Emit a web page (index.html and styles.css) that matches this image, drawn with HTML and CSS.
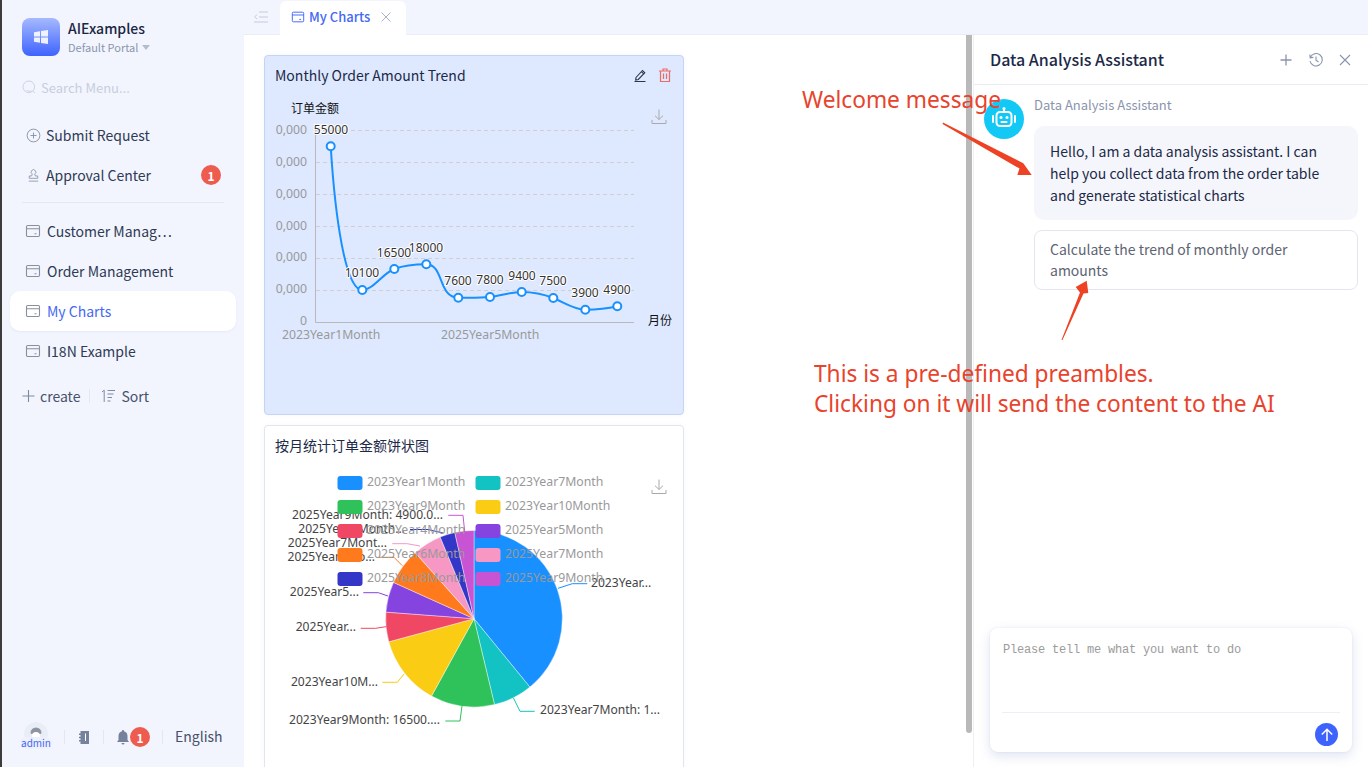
FILE: index.html
```html
<!DOCTYPE html>
<html lang="en">
<head>
<meta charset="utf-8">
<title>My Charts</title>
<link rel="stylesheet" href="styles.css">
</head>
<body>
<svg class="defs" width="0" height="0" aria-hidden="true">
  <symbol id="i-page" viewBox="0 0 16 16"><rect x="1.5" y="2.5" width="13" height="11" rx="1.2" fill="none" stroke="currentColor" stroke-width="1.1"/><path d="M1.5 5.7h13M9.5 10.8h2" fill="none" stroke="currentColor" stroke-width="1.1"/></symbol>
  <symbol id="i-down" viewBox="0 0 16 16"><path d="M8 1v10M4 7.2 8 11l4-3.8M1 11.5V15h14v-3.5" fill="none" stroke="currentColor" stroke-width="1"/></symbol>
</svg>
<div class="app">
  <aside class="sidebar">
    <div class="brand">
      <div class="logo"><svg width="16" height="16" viewBox="0 0 16 16"><path d="M1 3.2 7 2.2V7.6H1ZM8 2 15 1V7.6H8ZM1 8.4H7V13.8L1 12.8ZM8 8.4H15V15L8 14Z" fill="#fff" opacity=".88"/></svg></div>
      <div class="brand-text">
        <div class="brand-name">AIExamples</div>
        <div class="brand-sub">Default Portal <span class="caret"></span></div>
      </div>
    </div>
    <div class="search"><svg width="14" height="14" viewBox="0 0 14 14"><circle cx="6.8" cy="6.8" r="5.8" fill="none" stroke="#cdd3e2" stroke-width="1"/><path d="M4.5 10.5a5 5 0 0 0 5 .3M10.8 11l2 2" fill="none" stroke="#cdd3e2"/></svg><span>Search Menu...</span></div>
    <nav class="menu">
      <div class="item">
        <svg class="ic" viewBox="0 0 16 16"><circle cx="8" cy="8" r="6.8" fill="none" stroke="currentColor"/><path d="M8 4.8v6.4M4.8 8h6.4" stroke="currentColor"/></svg>
        <span class="label">Submit Request</span></div>
      <div class="item">
        <svg class="ic" viewBox="0 0 16 16"><path d="M6 8.500 6.700 6.500A2.500 2.500 0 1 1 9.300 6.500L10 8.500H12.500V11H3.500V8.500ZM3 14h10" fill="none" stroke="currentColor" stroke-width=".9"/></svg>
        <span class="label">Approval Center</span><span class="badge push">1</span></div>
      <div class="rule"></div>
      <div class="item page"><svg class="ic"><use href="#i-page"/></svg><span class="label ell">Customer Manag…</span></div>
      <div class="item page"><svg class="ic"><use href="#i-page"/></svg><span class="label">Order Management</span></div>
      <div class="item page active"><svg class="ic"><use href="#i-page"/></svg><span class="label">My Charts</span></div>
      <div class="item page"><svg class="ic"><use href="#i-page"/></svg><span class="label">I18N Example</span></div>
    </nav>
    <div class="tools">
      <svg width="13" height="14" viewBox="0 0 14 14"><path d="M7 .5v13M.5 7h13" stroke="#7f8aa3" stroke-width="1.2"/></svg>
      <span>create</span><i class="vr"></i>
      <svg width="15" height="14" viewBox="0 0 15 14"><path d="M1 3 3.200 1.200V13M6.500 1.500h7.500M6.500 5h6M6.500 8.500h4.500M6.500 12h3" fill="none" stroke="#7f8aa3"/></svg>
      <span>Sort</span>
    </div>
    <div class="foot">
      <div class="user"><div class="avatar"><svg width="24" height="24" viewBox="0 0 24 24"><circle cx="12" cy="12" r="12" fill="#e9edf5"/><path d="M6.500 11a5.500 5.500 0 0 1 11 0l-1 1H7.500Z" fill="#8d95a5"/><circle cx="12" cy="14" r="4" fill="#fff"/></svg></div><span class="user-tag">admin</span></div>
      <i class="vr"></i>
      <svg width="10" height="13" viewBox="0 0 10 13"><path d="M1.500 0H10V13H1.500V10.500H0V9H1.500V7.300H0V5.700H1.500V4H0V2.500H1.500Z" fill="#76829b"/><path d="M6.500 2.500V10" stroke="#fff"/></svg>
      <i class="vr"></i>
      <div class="bell"><svg width="14" height="15" viewBox="0 0 14 15"><path d="M7 0a1 1 0 0 1 1 1.200C10.500 1.800 11.500 3.800 11.500 6V10L13 12H1L2.500 10V6C2.500 3.800 3.500 1.800 6 1.200A1 1 0 0 1 7 0ZM5.500 13H8.500A1.500 1.500 0 0 1 5.500 13Z" fill="#76829b"/></svg><span class="badge">1</span></div>
      <i class="vr"></i>
      <span class="lang">English</span>
    </div>
  </aside>

  <main class="main">
    <header class="tabbar">
      <svg class="collapse" width="14" height="12" viewBox="0 0 14 12"><path d="M5 1h9M5 6h9M0 11h14M3 3.500.8 5.800 3 8" fill="none" stroke="#c4cbdb"/></svg>
      <div class="tab">
        <svg class="ic"><use href="#i-page"/></svg>
        <span>My Charts</span>
        <svg class="tab-x" width="10" height="10" viewBox="0 0 10 10"><path d="M.5.500l9 9M9.500.500l-9 9" stroke="#a9b1c4"/></svg>
      </div>
    </header>
    <div class="body">
      <section class="content">
        <article class="card selected">
          <div class="card-head">
            <h3>Monthly Order Amount Trend</h3>
            <div class="card-actions">
              <svg width="14" height="14" viewBox="0 0 14 14"><path d="M3 9.500 9.500 2.500 11.800 4.700 5.300 11.500 2.700 12ZM8.500 3.700l2.200 2.200M1.500 13.500h11" fill="none" stroke="#2b3653" stroke-width="1.100"/></svg>
              <svg width="12" height="14" viewBox="0 0 12 14"><path d="M0 3h12M4 3V1h4v2M1.500 3v10.500h9V3M4.500 5.500v5.500M7.500 5.500v5.500" fill="none" stroke="#ee6a63" stroke-width="1.200"/></svg>
            </div>
          </div>
          <svg class="chart chart-line" viewBox="276 95 396 310">
            <g class="grid">
              <path d="M316 130.500H634M316 162.500H634M316 194.500H634M316 226.500H634M316 258.500H634M316 290.500H634"/>
            </g>
            <path class="axis" d="M315.500 130V322.500H634"/>
            <text class="ax-name" x="291" y="113">订单金额</text>
            <text class="ax-name" x="648" y="325">月份</text>
            <g class="ax" text-anchor="end">
              <text x="307" y="134">60,000</text><text x="307" y="166">50,000</text><text x="307" y="198">40,000</text><text x="307" y="230">30,000</text><text x="307" y="261">20,000</text><text x="307" y="293">10,000</text><text x="307" y="325">0</text>
            </g>
            <text class="ax" x="282" y="339">2023Year1Month</text>
            <text class="ax" x="441" y="339">2025Year5Month</text>
            <use href="#i-down" x="651" y="108" width="16" height="17" class="dl"/>
            <path class="line" d="M330.700 146.300C335 215 345 290 362.300 290C373 290 383 273 394.300 269C405 265 415 264.300 426.300 264.300C444 264.300 438 297.700 458.300 297.700C468 297.700 480 298 490 297C500 296 510 292 521.700 292C532 292 543 294 553.300 298C565 303 574 309.700 585.300 309.700C596 309.700 606 309 617.300 306.300"/>
            <g class="dots">
              <circle cx="330.700" cy="146.300" r="4"/><circle cx="362.300" cy="290" r="4"/><circle cx="394.300" cy="269" r="4"/><circle cx="426.300" cy="264.300" r="4"/><circle cx="458.300" cy="297.700" r="4"/><circle cx="490" cy="297" r="4"/><circle cx="521.700" cy="292" r="4"/><circle cx="553.300" cy="298" r="4"/><circle cx="585.300" cy="309.700" r="4"/><circle cx="617.300" cy="306.300" r="4"/>
            </g>
            <g class="val" text-anchor="middle">
              <text x="331" y="134">55000</text><text x="362" y="277">10100</text><text x="394" y="257">16500</text><text x="426" y="252">18000</text><text x="458" y="285">7600</text><text x="490" y="284">7800</text><text x="522" y="280">9400</text><text x="553" y="285">7500</text><text x="585" y="297">3900</text><text x="617" y="294">4900</text>
            </g>
          </svg>
        </article>
        <article class="card">
          <div class="card-head"><h3>按月统计订单金额饼状图</h3></div>
          <svg class="chart chart-pie" viewBox="276 465 396 310">
            <use href="#i-down" x="651" y="478" width="16" height="17" class="dl"/>
            <g class="slices">
              <path fill="#1890ff" d="M474 618.700L474 530.400A88.300 88.300 0 0 1 529.900 687.100Z"/>
              <path fill="#13c2c2" d="M474 618.700L529.900 687.100A88.300 88.300 0 0 1 494.500 704.600Z"/>
              <path fill="#2fc25b" d="M474 618.700L494.500 704.600A88.300 88.300 0 0 1 431.500 696.100Z"/>
              <path fill="#facc14" d="M474 618.700L431.500 696.100A88.300 88.300 0 0 1 388.800 641.800Z"/>
              <path fill="#f04864" d="M474 618.700L388.800 641.800A88.300 88.300 0 0 1 385.900 612.100Z"/>
              <path fill="#8543e0" d="M474 618.700L385.900 612.100A88.300 88.300 0 0 1 393.500 582.400Z"/>
              <path fill="#ff7a1d" d="M474 618.700L393.500 582.400A88.300 88.300 0 0 1 415.300 552.800Z"/>
              <path fill="#f797c4" d="M474 618.700L415.300 552.800A88.300 88.300 0 0 1 440.200 537.100Z"/>
              <path fill="#3436c7" d="M474 618.700L440.200 537.100A88.300 88.300 0 0 1 454.800 532.500Z"/>
              <path fill="#c854d3" d="M474 618.700L454.800 532.500A88.300 88.300 0 0 1 474 530.400Z"/>
            </g>
            <g class="leaders">
              <path stroke="#1890ff" d="M558 588.300 572.300 583.700H587.300"/>
              <path stroke="#13c2c2" d="M513.300 697.700 520 711.300H534.700"/>
              <path stroke="#2fc25b" d="M462 706 460 721H445.300"/>
              <path stroke="#facc14" d="M404 674 397.300 682.300H382.300"/>
              <path stroke="#f04864" d="M386 626.700 375.700 628.300H360.700"/>
              <path stroke="#8543e0" d="M388 596 378.300 592.700H363.300"/>
              <path stroke="#ff7a1d" d="M402.300 565.700 394 557.300H379"/>
              <path stroke="#f797c4" d="M420 546 407.300 543.700H392.300"/>
              <path stroke="#3436c7" d="M443 533 428 529.500H410"/>
              <path stroke="#c854d3" d="M464.700 531.700 463 515.300H448.300"/>
            </g>
            <g class="lab">
              <text x="591" y="587">2023Year...</text>
              <text x="540" y="714">2023Year7Month: 1...</text>
              <text x="440" y="724" text-anchor="end">2023Year9Month: 16500....</text>
              <text x="378" y="686" text-anchor="end">2023Year10M...</text>
              <text x="356" y="631" text-anchor="end">2025Year...</text>
              <text x="359" y="596" text-anchor="end">2025Year5...</text>
              <text x="375" y="561" text-anchor="end">2025Year6Mo...</text>
              <text x="387" y="547" text-anchor="end">2025Year7Mont...</text>
              <text x="405" y="533" text-anchor="end">2025Year8Month...</text>
              <text x="443" y="519" text-anchor="end">2025Year9Month: 4900.0...</text>
            </g>
            <g class="swatches">
              <rect x="337.500" y="476" width="25" height="14" rx="3" fill="#1890ff"/><rect x="475.500" y="476" width="25" height="14" rx="3" fill="#13c2c2"/>
              <rect x="337.500" y="500" width="25" height="14" rx="3" fill="#2fc25b"/><rect x="475.500" y="500" width="25" height="14" rx="3" fill="#facc14"/>
              <rect x="337.500" y="524" width="25" height="14" rx="3" fill="#f04864"/><rect x="475.500" y="524" width="25" height="14" rx="3" fill="#8543e0"/>
              <rect x="337.500" y="548" width="25" height="14" rx="3" fill="#ff7a1d"/><rect x="475.500" y="548" width="25" height="14" rx="3" fill="#f797c4"/>
              <rect x="337.500" y="572" width="25" height="14" rx="3" fill="#3436c7"/><rect x="475.500" y="572" width="25" height="14" rx="3" fill="#c854d3"/>
            </g>
            <g class="ax">
              <text x="367" y="486">2023Year1Month</text><text x="505" y="486">2023Year7Month</text>
              <text x="367" y="510">2023Year9Month</text><text x="505" y="510">2023Year10Month</text>
              <text x="367" y="534">2025Year4Month</text><text x="505" y="534">2025Year5Month</text>
              <text x="367" y="558">2025Year6Month</text><text x="505" y="558">2025Year7Month</text>
              <text x="367" y="582">2025Year8Month</text><text x="505" y="582">2025Year9Month</text>
            </g>
          </svg>
        </article>
      </section>
      <div class="scroll-thumb"></div>
      <aside class="panel">
        <div class="panel-head">
          <h2>Data Analysis Assistant</h2>
          <div class="panel-actions">
            <svg width="14" height="14" viewBox="0 0 14 14"><path d="M7 1.500v11M1.500 7h11" stroke="#8a94ad" stroke-width="1.300"/></svg>
            <svg width="14" height="14" viewBox="0 0 14 14"><path d="M1.300 4.500A6.200 6.200 0 1 1 1 8M.8 1.500 1.200 4.800 4.400 4.400M7 3.500V7.300L9.500 9" fill="none" stroke="#8a94ad" stroke-width="1.100"/></svg>
            <svg width="12" height="12" viewBox="0 0 12 12"><path d="M1 1l10 10M11 1 1 11" stroke="#8a94ad" stroke-width="1.100"/></svg>
          </div>
        </div>
        <div class="chat">
          <div class="robot"><svg width="26" height="26" viewBox="0 0 26 26"><path d="M13 2v3" stroke="#fff" stroke-width="1.800"/><circle cx="13" cy="2.500" r="1.500" fill="#fff"/><rect x="5.500" y="6" width="15" height="14" rx="3.500" fill="none" stroke="#fff" stroke-width="2"/><circle cx="10" cy="11.500" r="1.500" fill="#fff"/><circle cx="16" cy="11.500" r="1.500" fill="#fff"/><path d="M10.500 16h5M2 10v6M24 10v6" stroke="#fff" stroke-width="2" stroke-linecap="round"/></svg></div>
          <div class="msg">
            <div class="msg-name">Data Analysis Assistant</div>
            <div class="bubble">Hello, I am a data analysis assistant. I can help you collect data from the order table and generate statistical charts</div>
            <div class="preamble">Calculate the trend of monthly order amounts</div>
          </div>
        </div>
        <div class="composer">
          <div class="placeholder">Please tell me what you want to do</div>
          <div class="composer-foot">
            <div class="send"><svg width="14" height="14" viewBox="0 0 14 14"><path d="M7 13V1.500M1.800 6.500 7 1.300l5.200 5.200" fill="none" stroke="#fff" stroke-width="1.500"/></svg></div>
          </div>
        </div>
      </aside>
    </div>
  </main>
</div>
<div class="note note-a">Welcome message</div>
<div class="note note-b">This is a pre-defined preambles.<br>Clicking on it will send the content to the AI</div>
<svg class="arrows" width="1368" height="767" viewBox="0 0 1368 767" aria-hidden="true">
  <path d="M943 122.500 1023.300 163.300 1031.700 175 1017.300 175 1019.500 168.500 942.500 124Z" fill="#ee4224"/>
  <path d="M1061.500 340 1080 292.500 1075.700 287 1086.700 280.700 1088.300 293 1083.500 293.500 1062.500 340Z" fill="#ee4224"/>
</svg>
</body>
</html>
```
FILE: styles.css
```css
* { box-sizing: border-box; }
html, body { margin: 0; height: 100%; overflow: hidden; }
body { font-family: "Noto Sans CJK SC", "Noto Sans", sans-serif; font-size: 14px; color: #2f3a55; background: #fff; }
.defs { position: absolute; }
.app { display: flex; height: 767px; }
.vr { display: block; width: 1px; height: 14px; background: #e3e7f0; }

/* sidebar */
.sidebar { width: 244px; flex: none; background: #f2f5fd; border-left: 2px solid #3c3c3c; display: flex; flex-direction: column; }
.brand { display: flex; gap: 8px; padding: 18px 0 0 20px; height: 55px; }
.logo { width: 38px; height: 38px; flex: none; border-radius: 8px; background: linear-gradient(180deg, #a5b9ff, #3e63fd); display: flex; align-items: center; justify-content: center; }
.brand-text { margin-top: -1px; }
.brand-name { font-size: 14px; font-weight: 500; line-height: 22px; color: #1b2643; }
.brand-sub { font-size: 11px; line-height: 16px; color: #8b95ae; display: flex; align-items: center; gap: 4px; }
.caret { border: 4px solid transparent; border-top: 5px solid #b5bccd; border-bottom: 0; }
.search { height: 20px; margin-top: 22px; padding-left: 20px; display: flex; align-items: center; gap: 5px; color: #c6cddf; font-size: 13px; }
.menu { margin-top: 18px; display: flex; flex-direction: column; }
.item { height: 40px; margin: 0 8px 0 8px; padding: 0 15px 0 16px; display: flex; align-items: center; gap: 5px; border-radius: 10px; }
.ic { width: 15px; height: 15px; flex: none; color: #8892a8; }
.item.page .ic { width: 16px; height: 16px; color: #8a8f9c; }
.item.page { gap: 6px; padding-left: 15px; }
.item.active { background: #fff; color: #4468f5; box-shadow: 0 1px 2px rgba(120,140,190,.1); }
.rule { height: 1px; background: #e4e8f2; margin: 7px 20px 8px 20px; }
.badge { width: 20px; height: 20px; flex: none; border-radius: 50%; background: #ee5c50; color: #fff; font-size: 12px; font-weight: 700; display: flex; align-items: center; justify-content: center; }
.push { margin-left: auto; }
.tools { display: flex; align-items: center; margin-top: 15px; height: 20px; padding-left: 20px; color: #47516c; }
.tools span { margin-left: 5px; }
.tools .vr { margin: 0 11px 0 9px; }
.foot { margin-top: auto; height: 60px; padding: 0 0 0 22px; display: flex; align-items: center; gap: 14px; }
.user { position: relative; width: 24px; height: 24px; margin-top: -6px; margin-right: 2px; }
.avatar { width: 24px; height: 24px; overflow: hidden; border-radius: 50%; }
.user-tag { position: absolute; left: -4px; top: 15px; width: 32px; height: 12px; line-height: 12px; border-radius: 6px; background: #eef0fc; color: #4468f5; font-size: 10px; text-align: center; }
.bell { display: flex; align-items: center; margin: 0 -2px 0 -2px; }
.lang { font-size: 14px; color: #47516c; margin: -2px 0 0 -2px; }

/* main */
.main { flex: 1; min-width: 0; display: flex; flex-direction: column; }
.tabbar { height: 35px; flex: none; background: #f2f5fd; border-bottom: 1px solid #e9edf6; display: flex; align-items: flex-end; padding-left: 10px; }
.collapse { align-self: center; margin-right: 12px; margin-bottom: 1px; }
.tab { height: 34px; margin-bottom: -1px; padding-bottom: 3px; width: 126px; background: #fff; border-radius: 6px 6px 0 0; display: flex; align-items: center; padding-left: 11px; gap: 4px; color: #4468f5; font-weight: 500; font-size: 13px; }
.tab .ic { color: #4468f5; width: 14px; height: 14px; }
.tab-x { margin-left: 7px; }
.body { flex: 1; min-height: 0; display: flex; position: relative; }
.content { width: 729px; flex: none; padding: 20px 0 0 20px; overflow: hidden; display: flex; flex-direction: column; gap: 10px; }
.card { width: 420px; height: 360px; flex: none; border: 1px solid #e2e5f0; border-radius: 4px; background: #fff; padding: 0 11px; box-shadow: 0 0 4px rgba(140,160,210,.08); }
.card.selected { background: #dee9ff; border-color: #c5d4f3; }
.card-head { height: 39px; padding-bottom: 2px; display: flex; align-items: center; justify-content: space-between; }
.card-head h3 { margin: 0 0 0 -1px; font-size: 14px; font-weight: 400; color: #1c2948; }
.card-actions { display: flex; gap: 12px; margin-right: 1px; }
.chart { display: block; width: 396px; height: 310px; font-family: "Noto Sans", "Noto Sans CJK SC", sans-serif; }

/* chart text */
.grid path { stroke: #d0cfcf; fill: none; stroke-dasharray: 4 3; }
.axis { stroke: #b9b9b9; fill: none; }
.ax text, text.ax { font-size: 12.25px; fill: #999; }
.ax-name { font-size: 12px; fill: #111; }
.dl { color: #aaa; }
.line { fill: none; stroke: #1890ff; stroke-width: 2; }
.dots circle { fill: #fff; stroke: #1890ff; stroke-width: 2; }
.val text { font-size: 12px; fill: #333; stroke: #fff; stroke-width: 2px; paint-order: stroke; }
.slices path { stroke: #fff; stroke-width: .4; }
.leaders path { fill: none; stroke-width: 1; }
.lab text { font-size: 12.1px; fill: #444; }

.scroll-thumb { position: absolute; left: 722px; top: 0; width: 6px; height: 698px; background: #b9b9b9; border-radius: 0 0 3px 3px; }

/* panel */
.panel { flex: 1; min-width: 0; border-left: 1px solid #eef0f6; display: flex; flex-direction: column; position: relative; }
.panel-head { height: 50px; flex: none; border-bottom: 1px solid #e9ecf4; display: flex; align-items: center; justify-content: space-between; padding: 0 17px 2px 16px; }
.panel-head h2 { margin: 0; font-size: 16px; font-weight: 500; color: #1c2948; }
.panel-actions { display: flex; align-items: center; gap: 16px; margin-top: 2px; }
.chat { display: flex; gap: 10px; padding: 14px 10px 0 10px; }
.robot { width: 40px; height: 40px; flex: none; border-radius: 50%; background: #12c9f6; display: flex; align-items: center; justify-content: center; }
.msg { flex: 1; min-width: 0; margin-top: -1px; }
.msg-name { font-size: 13px; line-height: 14px; color: #8a94ad; }
.bubble { margin-top: 14px; padding: 14px 15px 14px 16px; height: 94px; background: #f4f6fb; border-radius: 10px; color: #1c2948; line-height: 22px; }
.preamble { margin-top: 10px; height: 60px; padding: 8px 15px; border: 1px solid #e3e6f1; border-radius: 8px; color: #5d6472; line-height: 21px; }
.composer { position: absolute; left: 16px; top: 593px; width: 362px; height: 124px; background: #fff; border-radius: 8px; box-shadow: 0 4px 12px rgba(110,130,190,.22), 0 0 2px rgba(110,130,190,.15); padding: 0 12px; display: flex; flex-direction: column; }
.placeholder { height: 85px; border-bottom: 1px solid #eceff6; padding: 13px 0 0 1px; font-family: "Liberation Mono", monospace; font-size: 12px; letter-spacing: -.2px; line-height: 18px; color: #9b9b9b; }
.composer-foot { flex: 1; display: flex; align-items: center; justify-content: flex-end; padding: 4px 2px 0 0; }
.send { width: 23px; height: 23px; border-radius: 50%; background: #3e63fd; display: flex; align-items: center; justify-content: center; }

/* annotations */
.note { position: absolute; font-family: "Noto Sans", sans-serif; font-size: 22.7px; color: #e8432c; white-space: nowrap; }
.note-a { left: 802px; top: 85px; line-height: 30px; }
.note-b { left: 814px; top: 359px; line-height: 30px; }
.arrows { position: absolute; left: 0; top: 0; pointer-events: none; }
```
